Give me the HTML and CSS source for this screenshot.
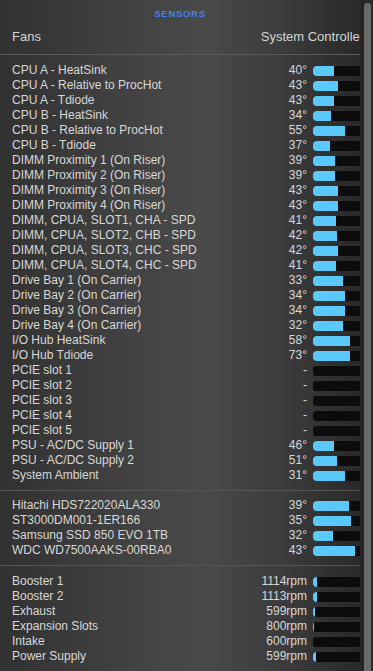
FILE: index.html
```html
<!DOCTYPE html>
<html>
<head>
    <title>Sensors</title>
    <link rel="stylesheet" href="styles.css">
</head>
<body>
    <div class="window">
        <div class="panel">
            <div class="title">SENSORS</div>
            <div class="header">
                <span>Fans</span>
                <span class="mode">System Controlled</span>
            </div>
            <div id="groups"></div>
        </div>
        <div class="scrollbar"><div class="thumb"></div></div>
    </div>

    <script>
        const groups = [
            [
                ["CPU A - HeatSink", "40°", 21],
                ["CPU A - Relative to ProcHot", "43°", 25],
                ["CPU A - Tdiode", "43°", 21],
                ["CPU B - HeatSink", "34°", 18],
                ["CPU B - Relative to ProcHot", "55°", 32],
                ["CPU B - Tdiode", "37°", 17],
                ["DIMM Proximity 1 (On Riser)", "39°", 22],
                ["DIMM Proximity 2 (On Riser)", "39°", 22],
                ["DIMM Proximity 3 (On Riser)", "43°", 25],
                ["DIMM Proximity 4 (On Riser)", "43°", 25],
                ["DIMM, CPUA, SLOT1, CHA - SPD", "41°", 23],
                ["DIMM, CPUA, SLOT2, CHB - SPD", "42°", 24],
                ["DIMM, CPUA, SLOT3, CHC - SPD", "42°", 25],
                ["DIMM, CPUA, SLOT4, CHC - SPD", "41°", 23],
                ["Drive Bay 1 (On Carrier)", "33°", 30],
                ["Drive Bay 2 (On Carrier)", "34°", 32],
                ["Drive Bay 3 (On Carrier)", "34°", 32],
                ["Drive Bay 4 (On Carrier)", "32°", 30],
                ["I/O Hub HeatSink", "58°", 37],
                ["I/O Hub Tdiode", "73°", 37],
                ["PCIE slot 1", "-", 0],
                ["PCIE slot 2", "-", 0],
                ["PCIE slot 3", "-", 0],
                ["PCIE slot 4", "-", 0],
                ["PCIE slot 5", "-", 0],
                ["PSU - AC/DC Supply 1", "46°", 21],
                ["PSU - AC/DC Supply 2", "51°", 24],
                ["System Ambient", "31°", 32]
            ],
            [
                ["Hitachi HDS722020ALA330", "39°", 36],
                ["ST3000DM001-1ER166", "35°", 38],
                ["Samsung SSD 850 EVO 1TB", "32°", 20],
                ["WDC WD7500AAKS-00RBA0", "43°", 42]
            ],
            [
                ["Booster 1", "1114rpm", 4],
                ["Booster 2", "1113rpm", 4],
                ["Exhaust", "599rpm", 2],
                ["Expansion Slots", "800rpm", 1],
                ["Intake", "600rpm", 0],
                ["Power Supply", "599rpm", 3]
            ]
        ];

        document.getElementById('groups').innerHTML = groups.map(rows => `
            <div class="group">
                ${rows.map(r => `
                    <div class="row">
                        <span class="name">${r[0]}</span>
                        <span class="value">${r[1]}</span>
                        <span class="bar"><span class="fill" style="width: ${r[2]}px"></span></span>
                    </div>
                `).join('')}
            </div>
        `).join('');
    </script>
</body>
</html>
```

FILE: styles.css
```css
html, body {
    margin: 0;
    height: 100%;
}
body {
    font-family: "Liberation Sans", Arial, sans-serif;
    color: #d8d8d8;
    background: #2c2c2c;
    overflow: hidden;
}
.window {
    display: flex;
    height: 671px;
    background: linear-gradient(90deg, #313131 0%, #404040 30%, #4a4a4a 55%, #3a3a3a 78%, #262626 100%);
}
.panel {
    width: 360px;
    overflow: hidden;
    flex-shrink: 0;
}
.title {
    padding-top: 8px;
    font-size: 9.5px;
    line-height: 12px;
    font-weight: bold;
    letter-spacing: 0.7px;
    text-align: center;
    color: #3f82f7;
}
.header {
    display: flex;
    justify-content: space-between;
    margin-top: 9px;
    padding: 0 0 9px 12px;
    font-size: 13px;
    line-height: 16px;
    white-space: nowrap;
    color: #d4d4d4;
    border-bottom: 1px solid #5a5a5a;
}
.mode {
    margin-right: -7px;
}
#groups {
    padding-top: 8px;
}
.group + .group {
    margin-top: 7px;
    padding-top: 7px;
    border-top: 1px solid #555555;
}
.group:last-child {
    padding-top: 8px;
}
.row {
    display: flex;
    align-items: center;
    height: 15px;
    padding-left: 12px;
    font-size: 12px;
    line-height: 15px;
    white-space: nowrap;
}
.name {
    flex: 1;
}
.value {
    margin-right: 6px;
}
.bar {
    display: block;
    width: 47px;
    height: 10px;
    background: #0c0c0c;
    border-radius: 3px 0 0 3px;
    overflow: hidden;
}
.fill {
    display: block;
    height: 100%;
    background: #5ac8fa;
    border-radius: 3px 0 0 3px;
}
.scrollbar {
    flex: 1;
    margin-left: 2px;
    padding: 3px 2px 0 1px;
    background: #2a2a2a;
    border-left: 1px solid #1e1e1e;
}
.thumb {
    height: 100%;
    background: #6a6a6a;
    border-radius: 4px 4px 0 0;
}
```
